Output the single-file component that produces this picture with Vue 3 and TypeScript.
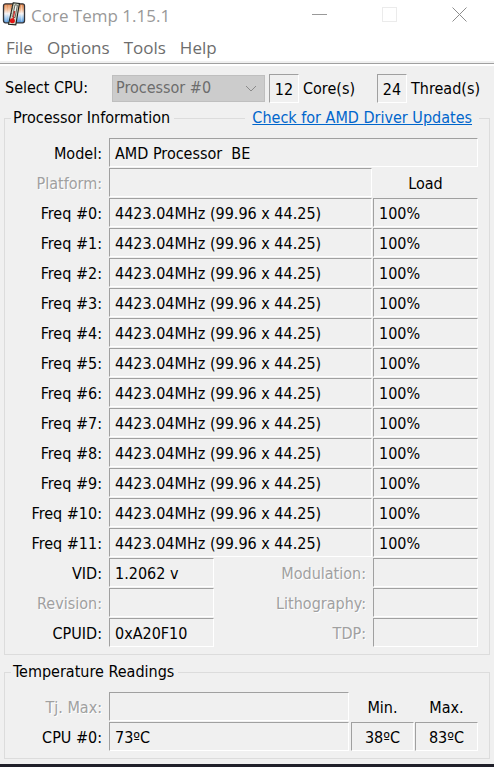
<script setup lang="ts">
interface CoreReading {
  label: string
  frequency: string
  load: string
}

interface InfoRow {
  label: string
  value: string
  disabled: boolean
  extra: string
}

const menus: string[] = ['File', 'Options', 'Tools', 'Help']

const cores: CoreReading[] = Array.from({ length: 12 }, (_, i) => ({
  label: `Freq #${i}:`,
  frequency: '4423.04MHz (99.96 x 44.25)',
  load: '100%',
}))

const details: InfoRow[] = [
  { label: 'VID:', value: '1.2062 v', disabled: false, extra: 'Modulation:' },
  { label: 'Revision:', value: '', disabled: true, extra: 'Lithography:' },
  { label: 'CPUID:', value: '0xA20F10', disabled: false, extra: 'TDP:' },
]
</script>

<template>
  <div class="window">
    <header class="titlebar">
      <svg class="logo" viewBox="0 0 24 24" aria-hidden="true">
        <defs>
          <linearGradient id="chip" x1="0" y1="0" x2="0" y2="1">
            <stop offset="0" stop-color="#d9793c" />
            <stop offset="0.3" stop-color="#f3b88f" />
            <stop offset="0.52" stop-color="#f4f2f4" />
            <stop offset="0.75" stop-color="#9cc8f0" />
            <stop offset="1" stop-color="#4a90d6" />
          </linearGradient>
        </defs>
        <rect x="1.5" y="1.8" width="21" height="19" rx="2" fill="url(#chip)" stroke="#33343a" stroke-width="1.3" />
        <path d="M4 3v16.5M7 3v16.5M19.5 3v16.5" stroke="#ffffff" stroke-opacity="0.35" />
        <path d="M11.2 0.8L17.4 1.4L13.8 22.8L6.6 22.2Z" fill="#d5d9c8" stroke="#1d211c" stroke-width="1.1" />
        <path d="M13 2.8L15.4 3.2L13 15.6L10.6 15Z" fill="#f8f8f3" stroke="#454a42" stroke-width="0.8" />
        <path d="M12.6 9L11 18" stroke="#c8302a" stroke-width="1.4" />
        <path d="M10.4 4L8.6 15" stroke="#454a42" stroke-dasharray="1 1.4" />
        <circle cx="10.4" cy="18.8" r="2.5" fill="#e01414" />
      </svg>
      <h1 class="title">Core Temp 1.15.1</h1>
      <div class="caption-buttons">
        <button type="button" aria-label="Minimize">
          <svg viewBox="0 0 16 16"><path d="M0 7.5h15" stroke="#999999" /></svg>
        </button>
        <button type="button" aria-label="Maximize" disabled>
          <svg viewBox="0 0 16 16"><rect x="0.5" y="0.5" width="14" height="14" fill="none" stroke="#ebebeb" /></svg>
        </button>
        <button type="button" aria-label="Close">
          <svg viewBox="0 0 16 16"><path d="M0.5 0.5l14 14M14.5 0.5l-14 14" stroke="#8c8c8c" /></svg>
        </button>
      </div>
    </header>

    <nav class="menubar">
      <button v-for="menu in menus" :key="menu" type="button">{{ menu }}</button>
    </nav>

    <main class="body">
      <div class="selector">
        <label for="cpu">Select CPU:</label>
        <div class="combo">
          <select id="cpu" disabled>
            <option>Processor #0</option>
          </select>
          <svg class="chevron" viewBox="0 0 12 8" aria-hidden="true"><path d="M1 1l5 5l5-5" fill="none" stroke="#8a8a8a" /></svg>
        </div>
        <div class="count">
          <output id="cores" class="field">12</output>
          <label for="cores">Core(s)</label>
        </div>
        <div class="count threads">
          <output id="threads" class="field">24</output>
          <label for="threads">Thread(s)</label>
        </div>
      </div>

      <fieldset class="group">
        <legend>Processor Information</legend>
        <a class="update" href="#">Check for AMD Driver Updates</a>
        <div class="rows">
          <div class="row model">
            <span class="name">Model:</span>
            <span class="field">AMD Processor&nbsp; BE</span>
          </div>
          <div class="row">
            <span class="name off">Platform:</span>
            <span class="field"></span>
            <span class="heading">Load</span>
          </div>
          <div v-for="core in cores" :key="core.label" class="row">
            <span class="name">{{ core.label }}</span>
            <span class="field">{{ core.frequency }}</span>
            <span class="field">{{ core.load }}</span>
          </div>
          <div v-for="item in details" :key="item.label" class="row detail">
            <span class="name" :class="{ off: item.disabled }">{{ item.label }}</span>
            <span class="field">{{ item.value }}</span>
            <span class="name off">{{ item.extra }}</span>
            <span class="field"></span>
          </div>
        </div>
      </fieldset>

      <fieldset class="group">
        <legend>Temperature Readings</legend>
        <div class="rows">
          <div class="row temps">
            <span class="name off">Tj. Max:</span>
            <span class="field"></span>
            <span class="heading">Min.</span>
            <span class="heading">Max.</span>
          </div>
          <div class="row temps">
            <span class="name">CPU #0:</span>
            <span class="field">73ºC</span>
            <span class="field centered">38ºC</span>
            <span class="field centered">83ºC</span>
          </div>
        </div>
      </fieldset>
    </main>
    <div class="edge"></div>
  </div>
</template>

<style>
body {
  background: #f0f0f0;
}
</style>

<style scoped>
.window {
  font-family: "DejaVu Sans Condensed", "Noto Sans", sans-serif;
  font-size: 16px;
  line-height: 20px;
  color: #000;
  background: #f0f0f0;
}

button {
  border: 0;
  padding: 0;
  background: none;
  font: inherit;
  color: inherit;
}

.titlebar,
.menubar {
  display: flex;
  align-items: center;
  background: #fff;
  font-family: "Open Sans", "Noto Sans", sans-serif;
  font-size: 17px;
}

.titlebar {
  height: 32px;
  padding: 0 2px;
}

.logo {
  width: 24px;
  height: 24px;
  margin-bottom: 4px;
}

.title {
  flex: 1;
  margin: 0 0 0 5px;
  font-size: inherit;
  font-weight: 400;
  color: #999;
}

.caption-buttons {
  display: flex;
  margin-right: -3px;
}

.caption-buttons button {
  display: grid;
  place-items: center;
  width: 70px;
  height: 32px;
}

.caption-buttons svg {
  width: 16px;
  height: 16px;
  margin-bottom: 3px;
}

.menubar {
  gap: 14px;
  box-sizing: border-box;
  height: 31px;
  padding: 2px 6px 0;
  border-bottom: 2px solid #f0f0f0;
  color: #6d6d6d;
}

.body {
  padding: 0 4px 5px;
  border-top: 1px solid #a0a0a0;
  box-shadow: inset 0 2px #fff;
}

.selector {
  display: flex;
  align-items: center;
  box-sizing: border-box;
  height: 44px;
  padding: 4px 0 0 1px;
}

.selector > label {
  width: 107px;
}

.combo {
  position: relative;
  width: 153px;
  margin-right: 4px;
}

.combo select {
  appearance: none;
  display: block;
  width: 100%;
  height: 27px;
  padding: 0 3px;
  border: 1px solid #bfbfbf;
  border-radius: 0;
  background: #ccc;
  font: inherit;
  color: #6d6d6d;
  opacity: 1;
}

.chevron {
  position: absolute;
  right: 8px;
  top: 10px;
  width: 12px;
  height: 8px;
}

.count {
  display: flex;
  align-items: center;
  gap: 4px;
  width: 108px;
  padding-top: 1px;
}

.count .field {
  width: 30px;
  padding-right: 0;
  padding-left: 0;
  text-align: center;
}

.threads {
  width: auto;
}

.group {
  position: relative;
  min-width: 0;
  margin: 0 0 7px;
  padding: 10px 11px 7px 0;
  border: 1px solid #dcdcdc;
}

.group:last-child {
  margin-bottom: 0;
}

.group legend {
  margin-left: 6px;
  padding: 0 4px 0 2px;
}

.update {
  position: absolute;
  top: -20px;
  right: 10px;
  padding: 0 7px;
  background: #f0f0f0;
  color: #0066cc;
}

.rows {
  display: grid;
  gap: 1px;
}

.row {
  display: grid;
  grid-template-columns: 103px 1fr 105px;
  gap: 1px;
  align-items: center;
}

.model {
  grid-template-columns: 103px 1fr;
}

.detail {
  grid-template-columns: 103px 105px 1fr 105px;
}

.temps {
  grid-template-columns: 103px 1fr 64px 63px;
}

.name,
.heading {
  padding-top: 2px;
}

.name {
  padding-right: 6px;
  text-align: right;
}

.off {
  color: #a0a0a0;
  text-shadow: 1px 1px #fff;
}

.field {
  box-sizing: border-box;
  height: 29px;
  padding: 5px 5px 2px;
  border: 1px solid;
  border-color: #a0a0a0 #fff #fff #a0a0a0;
  white-space: nowrap;
}

.heading,
.centered {
  text-align: center;
}

.centered {
  padding-right: 0;
  padding-left: 0;
}

.temps > :nth-child(3) {
  margin-left: 1px;
}

.edge {
  height: 3px;
  background: #20202a;
}
</style>
